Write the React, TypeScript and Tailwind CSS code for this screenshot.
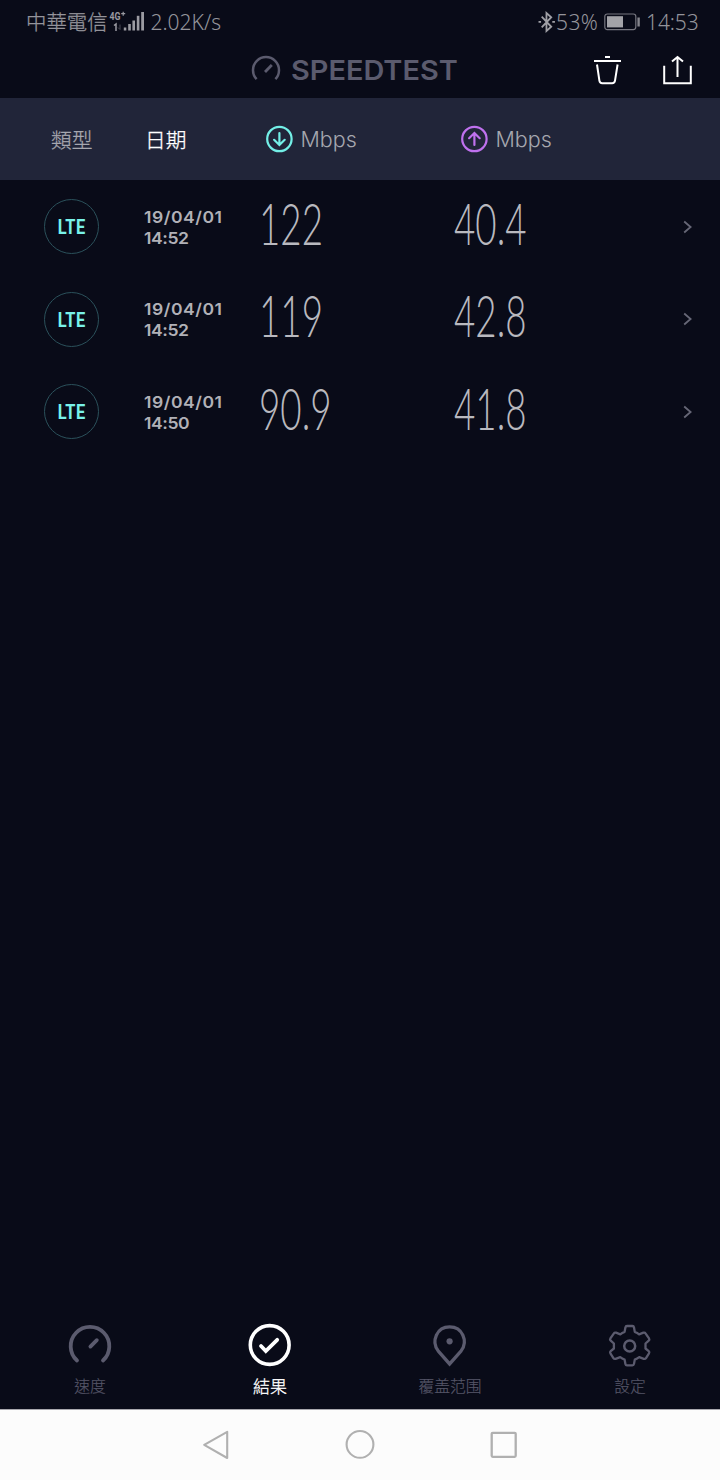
import type { ReactNode } from "react";

const results = [
    { id: 1, date: "19/04/01", time: "14:52", download: "122", upload: "40.4" },
    { id: 2, date: "19/04/01", time: "14:52", download: "119", upload: "42.8" },
    { id: 3, date: "19/04/01", time: "14:50", download: "90.9", upload: "41.8" },
];

function StatusBar() {
    return (
        <div className="flex h-11 items-center pl-[26px] pr-[21px] font-['Noto_Sans','Noto_Sans_CJK_TC',sans-serif] text-[#94949b]">
            <span className="-mt-0.5 w-[82px] whitespace-nowrap font-['Noto_Sans_CJK_TC',sans-serif] text-[20.4px] leading-none font-light [-webkit-text-stroke:0.3px_#94949b]">中華電信</span>
            <svg className="h-6 w-[38px] shrink-0" viewBox="0 0 38 24" fill="#9b9ba2">
                <text x="1.5" y="9.5" fontSize="10.5" fontWeight="700" fontFamily="Roboto, sans-serif" textLength="11" lengthAdjust="spacingAndGlyphs">4G</text>
                <path d="M13.2 3.7h4M15.2 1.7v4" stroke="#9b9ba2" strokeWidth="1.2" />
                <path d="M6 15.5l2-1.5v7" fill="none" stroke="#9b9ba2" strokeWidth="1.5" />
                <path d="M12 14.5v5l-2-2" fill="none" stroke="#4b4b54" strokeWidth="1" />
                <rect x="15.8" y="17.5" width="2.5" height="3" />
                <rect x="20.2" y="14" width="2.6" height="6.5" />
                <rect x="24.4" y="10.5" width="2.6" height="10" />
                <rect x="28.8" y="5.8" width="2.6" height="14.7" />
                <rect x="33.2" y="2" width="2.8" height="18.5" />
            </svg>
            <span className="ml-[4.5px] mt-px whitespace-nowrap text-[21px] font-light">2.02K/s</span>

            <div className="ml-auto flex items-center">
                <svg className="h-[22px] w-[18px]" viewBox="0 0 17 20" fill="none" stroke="#a0a0a6" strokeWidth="1.7">
                    <path d="M3.5 5l9 9.5-4.5 4v-17l4.5 4-9 9.5" />
                    <path d="M.5 9.8h2.4M13.5 9.8H16" />
                </svg>
                <span className="mt-px w-[48px] whitespace-nowrap text-[21px] font-light tracking-[0.4px]">53%</span>
                <svg className="h-[18px] w-9 shrink-0" viewBox="0 0 36 18">
                    <rect x=".8" y="1" width="31" height="15.6" rx="2.5" fill="none" stroke="#76767f" strokeWidth="1.2" />
                    <rect x="3" y="3.2" width="16" height="11.2" fill="#a3a3a8" />
                    <rect x="33.4" y="4.5" width="2.4" height="9" fill="#85858d" />
                </svg>
                <span className="ml-[6px] mt-px w-[53px] whitespace-nowrap text-[21px] font-light tracking-[-0.1px]">14:53</span>
            </div>
        </div>
    );
}

function TitleBar() {
    return (
        <div className="flex h-[54px] items-start text-[#5b5b6e]">
            <svg className="ml-[251px] mt-[11px] h-[30px] w-[30px]" viewBox="0 0 30 30" fill="none" stroke="currentColor" strokeWidth="2.5">
                <path d="M5.6 24.1A13 13 0 1 1 24.4 24.1" />
                <path d="M14 17l6.8-7" strokeWidth="2.8" />
            </svg>
            <div className="ml-[9.5px] mt-[11px] w-[167.5px] origin-left scale-x-[1.07] whitespace-nowrap font-['Inter',sans-serif] text-[27px] leading-[31px] font-semibold">
                SPEEDTEST
            </div>
            <svg className="ml-[135px] mt-[11px] h-[31px] w-[29px]" viewBox="0 0 29 31" fill="none" stroke="#fff" strokeWidth="2">
                <path d="M12 2h5M1 6h27" />
                <path d="M4 9.5l2.4 16.2q.4 2.6 2.8 2.6h10q2.4 0 2.8-2.6l2.6-16.2" />
            </svg>
            <svg className="ml-[41px] mt-[11px] h-[31px] w-[29px]" viewBox="0 0 29 31" fill="none" stroke="#fff" strokeWidth="2">
                <path d="M1.2 10.8v17.5h26.6V10.8M14.5 22V2.5M9 6.5l5.5-4.5L20 6.5" />
            </svg>
        </div>
    );
}

function SpeedHeading({ up = false }: { up?: boolean }) {
    return (
        <div className="flex w-[195px] items-center">
            <svg
                className={up ? "h-7 w-7 text-[#bf71ee]" : "h-7 w-7 text-[#73efe7]"}
                viewBox="0 0 28 28"
                fill="none"
                stroke="currentColor"
                strokeWidth="2.2"
                strokeLinecap="round"
            >
                <circle cx="14.4" cy="14" r="12.2" />
                <path d={up ? "M14.4 20V8.5M9.1 13.2L14.4 8l5.3 5.2" : "M14.4 8v11.5M9.1 14.8L14.4 20l5.3-5.2"} />
            </svg>
            <span className="ml-[7.5px] font-['Inter',sans-serif] text-[21.5px] text-[#a6a7af]">Mbps</span>
        </div>
    );
}

function TableHeader() {
    return (
        <div className="flex h-[82px] items-center bg-[#212539] pl-[51px] font-['Noto_Sans_CJK_TC',sans-serif] text-[20.7px] font-light">
            <span className="mt-0.5 w-[94px] text-[#a6a7af] [-webkit-text-stroke:0.3px_#a6a7af]">類型</span>
            <span className="mt-0.5 w-[120px] text-white [-webkit-text-stroke:0.3px_#fff]">日期</span>
            <SpeedHeading />
            <SpeedHeading up />
        </div>
    );
}

function Speed({ value }: { value: string }) {
    return (
        <div className="w-[195px]">
            <span className="-mt-[6px] mb-0.5 inline-block origin-left scale-x-[0.645] whitespace-nowrap font-['Lato',sans-serif] text-[57px] leading-[58px] font-light text-[#b9b9bf]">
                {value}
            </span>
        </div>
    );
}

function ResultRow({ result }: { result: (typeof results)[number] }) {
    return (
        <div className="flex h-[92.6px] items-center pl-[44px] pt-px">
            <div className="flex h-[55px] w-[55px] shrink-0 items-center justify-center rounded-full border-[1.5px] border-[#2b515b] font-['Roboto',sans-serif] text-[19.5px] font-bold text-[#78f2e9]">
                <span className="mt-0.5 scale-x-[0.84] tracking-[0.7px]">LTE</span>
            </div>
            <div className="ml-[44.5px] mt-0.5 w-[115px] origin-left scale-x-[1.065] whitespace-nowrap font-['Inter',sans-serif] text-[16.5px] leading-[21px] font-semibold tracking-[0.5px] text-[#b1b1b7]">
                <div>{result.date}</div>
                <div className="tracking-[-0.4px]">{result.time}</div>
            </div>
            <Speed value={result.download} />
            <Speed value={result.upload} />
            <svg className="ml-[34px] h-3.5 w-2.5" viewBox="0 0 10 14" fill="none" stroke="#666776" strokeWidth="1.8">
                <path d="M1.2 1.5l6.4 5.5-6.4 5.5" />
            </svg>
        </div>
    );
}

function Tab({ label, active = false, children }: { label: string; active?: boolean; children: ReactNode }) {
    return (
        <div className={active ? "flex flex-1 flex-col items-center text-white" : "flex flex-1 flex-col items-center text-[#5b5b6e]"}>
            <svg className="h-11 w-11" viewBox="0 0 44 44" fill="none" stroke="currentColor" strokeWidth="3" strokeLinecap="round">
                {children}
            </svg>
            <span
                className={
                    active
                        ? "mt-[7px] text-[17px] leading-[24px] font-light [-webkit-text-stroke:0.3px_#fff]"
                        : "mt-[7px] text-[15.8px] leading-[24px] font-light text-[#555567] [-webkit-text-stroke:0.2px_#555567]"
                }
            >
                {label}
            </span>
        </div>
    );
}

function TabBar() {
    return (
        <div className="flex h-[86px] font-['Noto_Sans_CJK_TC',sans-serif]">
            <Tab label="速度">
                <path d="M9 37.5A19.3 19.3 0 1 1 35 37.5" strokeWidth="3.8" />
                <path d="M22.4 23.6l6.4-6.4" strokeWidth="3.8" />
            </Tab>
            <Tab label="結果" active>
                <circle cx="21.7" cy="22" r="19.4" strokeWidth="3.6" />
                <path d="M13 23l4.8 5L29.2 16.8" strokeWidth="3.8" />
            </Tab>
            <Tab label="覆盖范围">
                <path d="M21.5 41L9.5 27.8C2 18 8.2 3.9 21.5 3.9S41 18 33.5 27.8Z" strokeWidth="3.4" strokeLinejoin="miter" transform="translate(1 0) scale(.96 1)" />
                <circle cx="21.6" cy="18.3" r="3.1" fill="currentColor" stroke="none" />
            </Tab>
            <Tab label="設定">
                <path
                    d="M19.3 3h5.4q1.3 0 1.6 1.5l.8 4.4q2.6 1 4.3 2.4l4.3-1.6q1.4-.5 2.1.7l3.5 5q.8 1.3-.3 2.2L37.8 20.5v5L41 28.2q1.1 1 .3 2.2l-3 4.7q-.8 1.2-2.2.7l-4.6-1.6q-2 1.5-4.4 2.4l-.8 4.3q-.3 1.5-1.6 1.5h-5.4q-1.3 0-1.6-1.5l-.8-4.3q-2.4-.9-4.4-2.4l-4.6 1.6q-1.4.5-2.2-.7l-3-4.7q-.8-1.2.3-2.2l3.2-2.7v-5L3 17.6q-1.1-.9-.3-2.2l3.5-5q.7-1.2 2.1-.7l4.3 1.6q1.7-1.4 4.3-2.4l.8-4.4Q18 3 19.3 3Z"
                    strokeWidth="2.3"
                    strokeLinejoin="round"
                    transform="translate(-.3 0)"
                />
                <circle cx="21.7" cy="23" r="5.5" strokeWidth="2.5" />
            </Tab>
        </div>
    );
}

function SystemNav() {
    return (
        <div className="flex h-[71px] justify-center gap-[112px] border-t border-[#a9a8ae] bg-[#fcfcfc] pt-[18px]">
            <svg className="h-8 w-8" viewBox="0 0 32 32" fill="none" stroke="#b0b0b0" strokeWidth="2.1" strokeLinejoin="round">
                <path d="M4.2 16.8L27.2 3.8v26.2Z" />
            </svg>
            <svg className="h-8 w-8" viewBox="0 0 32 32" fill="none" stroke="#b0b0b0" strokeWidth="2.1">
                <circle cx="16" cy="16.4" r="13.4" />
            </svg>
            <svg className="h-8 w-8" viewBox="0 0 32 32" fill="none" stroke="#b0b0b0" strokeWidth="2.3">
                <rect x="3.7" y="4.8" width="24" height="24" rx="1" />
            </svg>
        </div>
    );
}

function App() {
    return (
        <div className="flex h-[1480px] w-[720px] flex-col overflow-hidden bg-[#090b18]">
            <StatusBar />
            <TitleBar />
            <TableHeader />

            {/* Results */}
            <div className="flex-1">
                {results.map((result) => (
                    <ResultRow key={result.id} result={result} />
                ))}
            </div>

            <TabBar />
            <SystemNav />
        </div>
    );
}

export default App;
